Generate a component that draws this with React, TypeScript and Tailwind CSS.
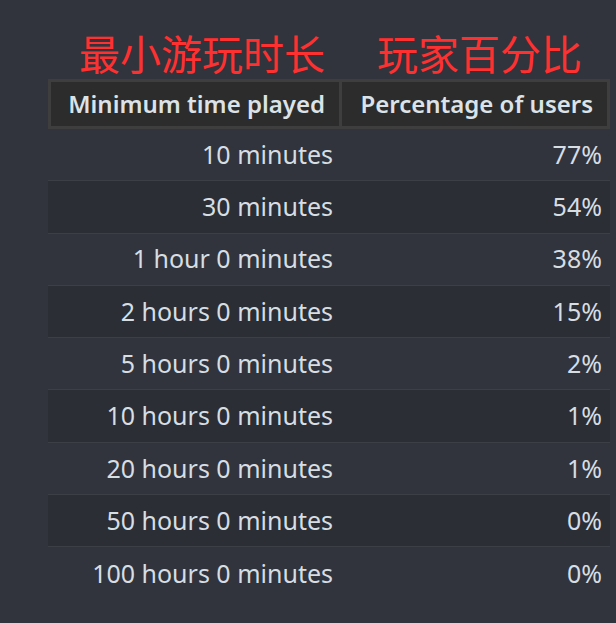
const rows = [
  { time: "10 minutes", pct: "77%" },
  { time: "30 minutes", pct: "54%" },
  { time: "1 hour 0 minutes", pct: "38%" },
  { time: "2 hours 0 minutes", pct: "15%" },
  { time: "5 hours 0 minutes", pct: "2%" },
  { time: "10 hours 0 minutes", pct: "1%" },
  { time: "20 hours 0 minutes", pct: "1%" },
  { time: "50 hours 0 minutes", pct: "0%" },
  { time: "100 hours 0 minutes", pct: "0%" },
];

export default function App() {
  return (
    <div
      className="h-[623px] w-[616px] overflow-hidden bg-[#31343c] pt-[30px]"
      style={{ fontFamily: '"Noto Sans", "Noto Sans CJK SC", sans-serif' }}
    >
      {/* Annotations */}
      <div className="flex h-[49px] items-center text-[41px] leading-none text-[#ff3030]">
        <span className="ml-[79px] w-[298px]">最小游玩时长</span>
        <span>玩家百分比</span>
      </div>

      <div className="ml-[48px] w-[562px]">
        {/* Header */}
        <div className="flex h-[50px] border-[3px] border-[#3e3e3e] bg-[#2c2c2c] text-[24px] font-semibold text-[#dce3e8]">
          <div className="flex w-[291px] items-center justify-end border-r-[3px] border-[#3e3e3e] pr-[14px]">
            Minimum time played
          </div>
          <div className="flex flex-1 items-center justify-end pr-[14px]">
            Percentage of users
          </div>
        </div>

        {/* Rows */}
        {rows.map((row, i) => (
          <div
            key={row.time}
            className={`flex h-[52.3px] items-center text-[25px] text-[#d6dde3] ${
              i % 2 === 1 ? "bg-[#2b2e35]" : ""
            } ${i < rows.length - 1 ? "border-b border-[#3c3f45]" : ""}`}
          >
            <div className="w-[285px] text-right">{row.time}</div>
            <div className="flex-1 pr-[8px] text-right">{row.pct}</div>
          </div>
        ))}
      </div>
    </div>
  );
}
